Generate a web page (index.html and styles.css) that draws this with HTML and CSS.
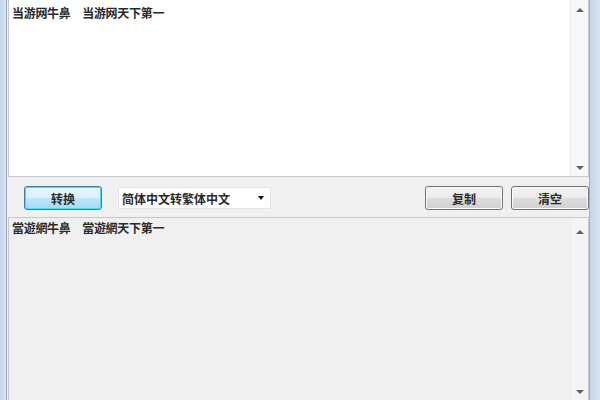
FILE: index.html
```html
<!DOCTYPE html>
<html>
<head>
<meta charset="utf-8">
<link rel="stylesheet" href="styles.css">
</head>
<body>
<div class="window">
  <div class="frame frame-left"></div>
  <div class="main">
    <div class="box box-input">
      <div class="text">当游网牛鼻　当游网天下第一</div>
      <div class="scrollbar">
        <span class="arrow up"></span>
        <span class="arrow down"></span>
      </div>
    </div>
    <div class="toolbar">
      <button class="btn btn-primary">转换</button>
      <div class="select"><span>简体中文转繁体中文</span><span class="caret"></span></div>
      <div class="spacer"></div>
      <button class="btn">复制</button>
      <button class="btn">清空</button>
    </div>
    <div class="box box-output">
      <div class="text">當遊網牛鼻　當遊網天下第一</div>
      <div class="scrollbar">
        <span class="arrow up"></span>
        <span class="arrow down"></span>
      </div>
    </div>
  </div>
  <div class="frame frame-right"></div>
</div>
</body>
</html>
```
FILE: styles.css
```css
html, body {
  margin: 0;
  padding: 0;
  width: 600px;
  height: 400px;
  overflow: hidden;
  background: #f0f0f0;
  font-family: "Noto Sans CJK SC", "Liberation Sans", sans-serif;
}
.window {
  display: flex;
  width: 600px;
  height: 400px;
}
.frame {
  flex: none;
  background: linear-gradient(90deg, #c4d6ea, #d6e4f2);
}
.frame-left {
  width: 6px;
  border-right: 1px solid #9aa6b3;
}
.frame-right {
  width: 10px;
  border-left: 1px solid #a6b0bb;
}
.main {
  flex: 1;
  display: flex;
  flex-direction: column;
  background: #f0f0f0;
  padding-left: 1px;
}
.box {
  display: flex;
  border: 1px solid #c5c9cf;
  border-top: none;
}
.box-input {
  height: 176px;
  background: #fff;
}
.box-output {
  flex: 1;
  background: #f0f0f0;
  border-top: 1px solid #c5c9cf;
  border-bottom: none;
}
.text {
  flex: 1;
  padding: 5px 0 0 3px;
  font-size: 12px;
  line-height: 16px;
  font-weight: bold;
  color: #2a2a2a;
  letter-spacing: -0.3px;
}
.box-output .text {
  padding-top: 2px;
}
.scrollbar {
  width: 17px;
  display: flex;
  flex-direction: column;
  justify-content: space-between;
  align-items: center;
  background: #f4f4f4;
  border-left: 1px solid #ececec;
}
.box-input .scrollbar {
  background: #f8f8f8;
}
.arrow {
  width: 0;
  height: 0;
  border-left: 4px solid transparent;
  border-right: 4px solid transparent;
}
.arrow.up {
  border-bottom: 4px solid #606060;
  margin-top: 8px;
}
.arrow.down {
  border-top: 4px solid #606060;
  margin-bottom: 6px;
}
.box-output .arrow.up { margin-top: 12px; }
.toolbar {
  height: 40px;
  display: flex;
  align-items: center;
  padding: 0 0 0 16px;
  gap: 8px;
  box-sizing: border-box;
  padding-top: 2px;
}
.btn {
  width: 78px;
  height: 24px;
  border: 1px solid #707070;
  border-radius: 3px;
  background: linear-gradient(#f2f2f2 0%, #ebebeb 50%, #dddddd 51%, #cfcfcf 100%);
  font-family: "Noto Sans CJK SC", sans-serif;
  font-size: 12px;
  font-weight: bold;
  color: #2a2a2a;
  padding: 0;
  box-shadow: inset 0 0 0 1px #fcfcfc;
}
.btn-primary {
  border-color: #3c7fb1;
  background: linear-gradient(#eaf6fd 0%, #d9f0fc 50%, #bee6fd 51%, #a7d9f5 100%);
  box-shadow: inset 0 0 0 1px #48d8f8;
  margin-right: 8px;
}
.select {
  width: 153px;
  height: 22px;
  box-sizing: border-box;
  background: #fff;
  border: 1px solid #e3e3e3;
  display: flex;
  align-items: center;
  justify-content: space-between;
  padding: 0 6px 0 3px;
  font-size: 12px;
  font-weight: bold;
  color: #2a2a2a;
}
.caret {
  width: 0;
  height: 0;
  border-left: 3.5px solid transparent;
  border-right: 3.5px solid transparent;
  border-top: 4px solid #111;
}
.spacer {
  flex: 1;
}
```
